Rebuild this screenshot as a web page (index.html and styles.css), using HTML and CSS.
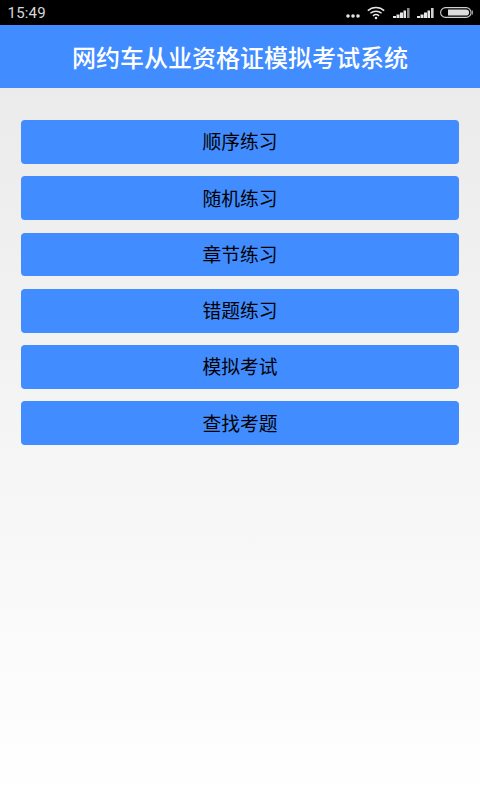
FILE: index.html
```html
<!DOCTYPE html>
<html lang="zh-CN">
<head>
  <meta charset="UTF-8" />
  <meta name="viewport" content="width=device-width, initial-scale=1.0" />
  <title>网约车从业资格证模拟考试系统</title>
  <link rel="stylesheet" href="styles.css">
</head>
<body>

  <div class="status-bar">
    <span class="clock">15:49</span>
    <div class="status-icons">
      <svg class="dots" width="14" height="4" viewBox="0 0 14 4"><circle cx="2" cy="2" r="1.8"/><circle cx="7" cy="2" r="1.8"/><circle cx="12" cy="2" r="1.8"/></svg>
      <svg class="wifi" width="18" height="14" viewBox="0 0 18 14" fill="none" stroke="#e6e6e6" stroke-width="1.5">
        <path d="M.8 4.6C5.5 .3 12.5 .3 17.2 4.6"/>
        <path d="M3.4 7.3C6.7 4.4 11.3 4.4 14.6 7.3"/>
        <path d="M5.9 9.8C7.8 8.3 10.2 8.3 12.1 9.8"/>
        <circle cx="9" cy="12" r="1.3" fill="#e6e6e6" stroke="none"/>
      </svg>
      <svg class="signal" width="17" height="10" viewBox="0 0 17 10"><path d="M0 8h3v2H0zM3.5 6.5h3V10h-3zM7 4.5h3V10H7zM10.5 2.5H13V10h-2.5z" fill="#e6e6e6"/><path d="M14 0h2.6v10H14z" fill="#8c8c8c"/></svg>
      <svg class="signal" width="17" height="10" viewBox="0 0 17 10"><path d="M0 8h3v2H0zM3.5 6.5h3V10h-3zM7 4.5h3V10H7zM10.5 2.5H13V10h-2.5z" fill="#e6e6e6"/><path d="M14 0h2.6v10H14z" fill="#d0d0d0"/></svg>
      <svg class="battery" width="33" height="11" viewBox="0 0 33 11"><rect x=".6" y=".6" width="30.5" height="9.8" rx="4.9" fill="none" stroke="#cfcfcf" stroke-width="1.1"/><path d="M8 2.4h18a3.1 3.1 0 0 1 0 6.2H8z" fill="#dcdcdc"/><rect x="31.8" y="3.5" width="1.2" height="4" fill="#999"/></svg>
    </div>
  </div>

  <header class="title-bar">
    <h1>网约车从业资格证模拟考试系统</h1>
  </header>

  <main class="menu">
    <button class="menu-btn">顺序练习</button>
    <button class="menu-btn">随机练习</button>
    <button class="menu-btn">章节练习</button>
    <button class="menu-btn">错题练习</button>
    <button class="menu-btn">模拟考试</button>
    <button class="menu-btn">查找考题</button>
  </main>

</body>
</html>
```

FILE: styles.css
```css
html, body {
  height: 100%;
}

body {
  margin: 0;
  display: flex;
  flex-direction: column;
  font-family: "Noto Sans CJK SC", "Liberation Sans", sans-serif;
  background: #fff;
}

.status-bar {
  height: 25px;
  flex-shrink: 0;
  background: #000;
  display: flex;
  align-items: center;
  justify-content: space-between;
  padding: 0 7px 0 7.5px;
}

.clock {
  font-family: "Roboto", sans-serif;
  font-size: 15px;
  letter-spacing: 0.2px;
  color: #d8d8d8;
}

.status-icons {
  display: flex;
  align-items: center;
  gap: 7.5px;
}

.dots {
  fill: #e6e6e6;
  margin: 6px -0.5px 0 0;
}

.battery {
  margin-left: -1.5px;
}

.title-bar {
  height: 62.5px;
  flex-shrink: 0;
  background: #418cff;
  display: flex;
  align-items: center;
  justify-content: center;
}

.title-bar h1 {
  margin: 0;
  font-size: 24px;
  font-weight: 500;
  color: #fff;
}

.menu {
  flex: 1;
  display: flex;
  flex-direction: column;
  gap: 12.5px;
  padding: 32.5px 21px 0;
  background: linear-gradient(180deg, #ebebeb, #ffffff);
}

.menu-btn {
  height: 43.75px;
  padding: 0 0 2px;
  border: none;
  border-radius: 4px;
  background: #418cff;
  color: #000;
  font-family: inherit;
  font-size: 18.75px;
}
```
